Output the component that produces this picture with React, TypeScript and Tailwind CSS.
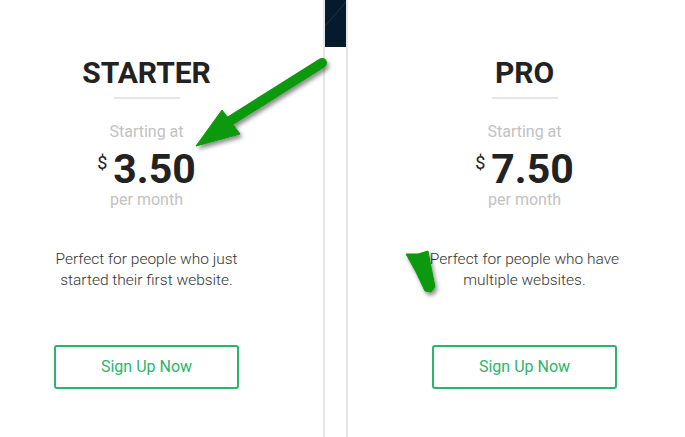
import React from "react";

type Plan = { name: string; price: string; text: string[] };

const plans: Plan[] = [
  { name: "STARTER", price: "3.50", text: ["Perfect for people who just", "started their first website."] },
  { name: "PRO", price: "7.50", text: ["Perfect for people who have", "multiple websites."] },
];

const PlanCard = ({ plan }: { plan: Plan }) => {
  return (
    <div className="w-[353px] shrink-0 flex flex-col items-center pt-[55px]">
      <div className="text-[30px] leading-[36px] font-bold text-[#222]">{plan.name}</div>
      <div className="w-[66px] h-[2px] bg-[#e6e6e6] mt-[6px]"></div>
      <div className="mt-[23px] text-[16px] leading-[20px] text-[#c2c2c2]">Starting at</div>
      <div className="flex items-start mt-[7px] text-[#222]">
        <span className="text-[18px] leading-[18px] mt-[5px] mr-[6px]">$</span>
        <span className="text-[41px] leading-[41px] font-bold">{plan.price}</span>
      </div>
      <div className="text-[16px] leading-[20px] text-[#c2c2c2]">per month</div>
      <div className="mt-[39px] text-[15.5px] leading-[21px] font-light text-[#333] text-center">
        {plan.text.map((t) => (
          <div key={t}>{t}</div>
        ))}
      </div>
      <button className="mt-[54px] w-[185px] h-[44px] border-2 border-[#2db46b] rounded-[3px] text-[16px] text-[#2db46b] bg-white">
        Sign Up Now
      </button>
    </div>
  );
};

export default function App() {
  return (
    <div
      className="relative w-[685px] h-[437px] overflow-hidden bg-white"
      style={{ fontFamily: "Roboto, 'Liberation Sans', sans-serif" }}
    >
      <div className="flex h-full -ml-[30px]">
        <PlanCard plan={plans[0]} />
        <div className="w-[2px] shrink-0 bg-[#e6e6e6]"></div>
        <div className="w-[21px] shrink-0 flex flex-col">
          <div className="h-[47px] bg-[#061a2e]">
            <svg width="21" height="47" viewBox="0 0 21 47">
              <line x1="0" y1="26" x2="21" y2="2" stroke="#1b3452" strokeWidth="1" />
            </svg>
          </div>
        </div>
        <div className="w-[2px] shrink-0 bg-[#e6e6e6]"></div>
        <PlanCard plan={plans[1]} />
      </div>
      <svg
        className="absolute left-0 top-0 pointer-events-none"
        width="685"
        height="437"
        viewBox="0 0 685 437"
      >
        <defs>
          <filter id="sh" x="-20%" y="-20%" width="140%" height="140%">
            <feDropShadow dx="2" dy="3" stdDeviation="2" floodColor="#000" floodOpacity="0.45" />
          </filter>
        </defs>
        <g filter="url(#sh)" fill="#0b990b" stroke="#0b990b">
          <line x1="322" y1="63" x2="222" y2="126" strokeWidth="10" strokeLinecap="round" />
          <polygon points="196,146 222,110 240,134" strokeWidth="1" strokeLinejoin="round" />
          <polygon
            points="406,254 418,254 428,251 430,262 435,287 431,292 425,291 416,272"
            strokeWidth="1"
            strokeLinejoin="round"
          />
        </g>
      </svg>
    </div>
  );
}
